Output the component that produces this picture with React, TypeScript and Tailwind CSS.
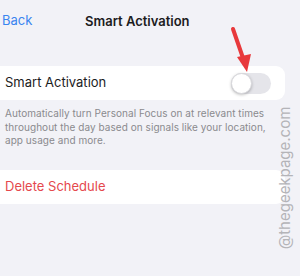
import React from 'react';

export default function App() {
  return (
    <div className="relative w-[300px] h-[276px] overflow-hidden bg-[#f2f2f7] font-['Inter',sans-serif]">
      {/* Nav bar */}
      <div className="relative h-[42px] flex items-center">
        <span className="pl-[2px] text-[13px] text-[#3a85f0]">Back</span>
        <span className="absolute left-[85px] top-[12px] text-[13px] font-semibold text-[#1c1c1e]">Smart Activation</span>
      </div>

      <div className="h-[24px]" />

      {/* Toggle card */}
      <div className="ml-[-10px] w-[295px] h-[34px] bg-white rounded-r-[9px] flex items-center justify-between pl-[15px] pr-[14px]">
        <span className="text-[13px] text-[#1c1c1e]">Smart Activation</span>
        <div className="relative w-[40px] h-[21px] rounded-full bg-[#e5e5ea]">
          <div className="absolute left-0 top-0 w-[21px] h-[21px] rounded-full bg-white border border-[#d8d8dc] shadow-[0_1px_3px_rgba(0,0,0,0.25)]" />
        </div>
      </div>

      <p className="pl-[5px] pr-[22px] pt-[7px] text-[10px] leading-[13.5px] tracking-[0.05px] text-[#8a8a8e]">
        Automatically turn Personal Focus on at relevant times throughout the day based on signals like your location, app usage and more.
      </p>

      <div className="h-[22px]" />

      {/* Delete card */}
      <div className="ml-[-10px] w-[295px] h-[34px] bg-white rounded-r-[9px] flex items-center pl-[15px]">
        <span className="text-[13px] text-[#e5484d]">Delete Schedule</span>
      </div>

      {/* Watermark */}
      <div className="absolute left-[285px] top-[178px] -translate-x-1/2 -translate-y-1/2 -rotate-90 whitespace-nowrap text-[15px] text-[#b4b4b8]">
        @thegeekpage.com
      </div>

      {/* Red arrow */}
      <svg className="absolute left-0 top-0" width="300" height="276" viewBox="0 0 300 276">
        <line x1="233" y1="29" x2="243" y2="58" stroke="#e8393c" strokeWidth="4" strokeLinecap="round" />
        <polygon points="237,57 251,54 247,72" fill="#e8393c" />
      </svg>
    </div>
  );
}
